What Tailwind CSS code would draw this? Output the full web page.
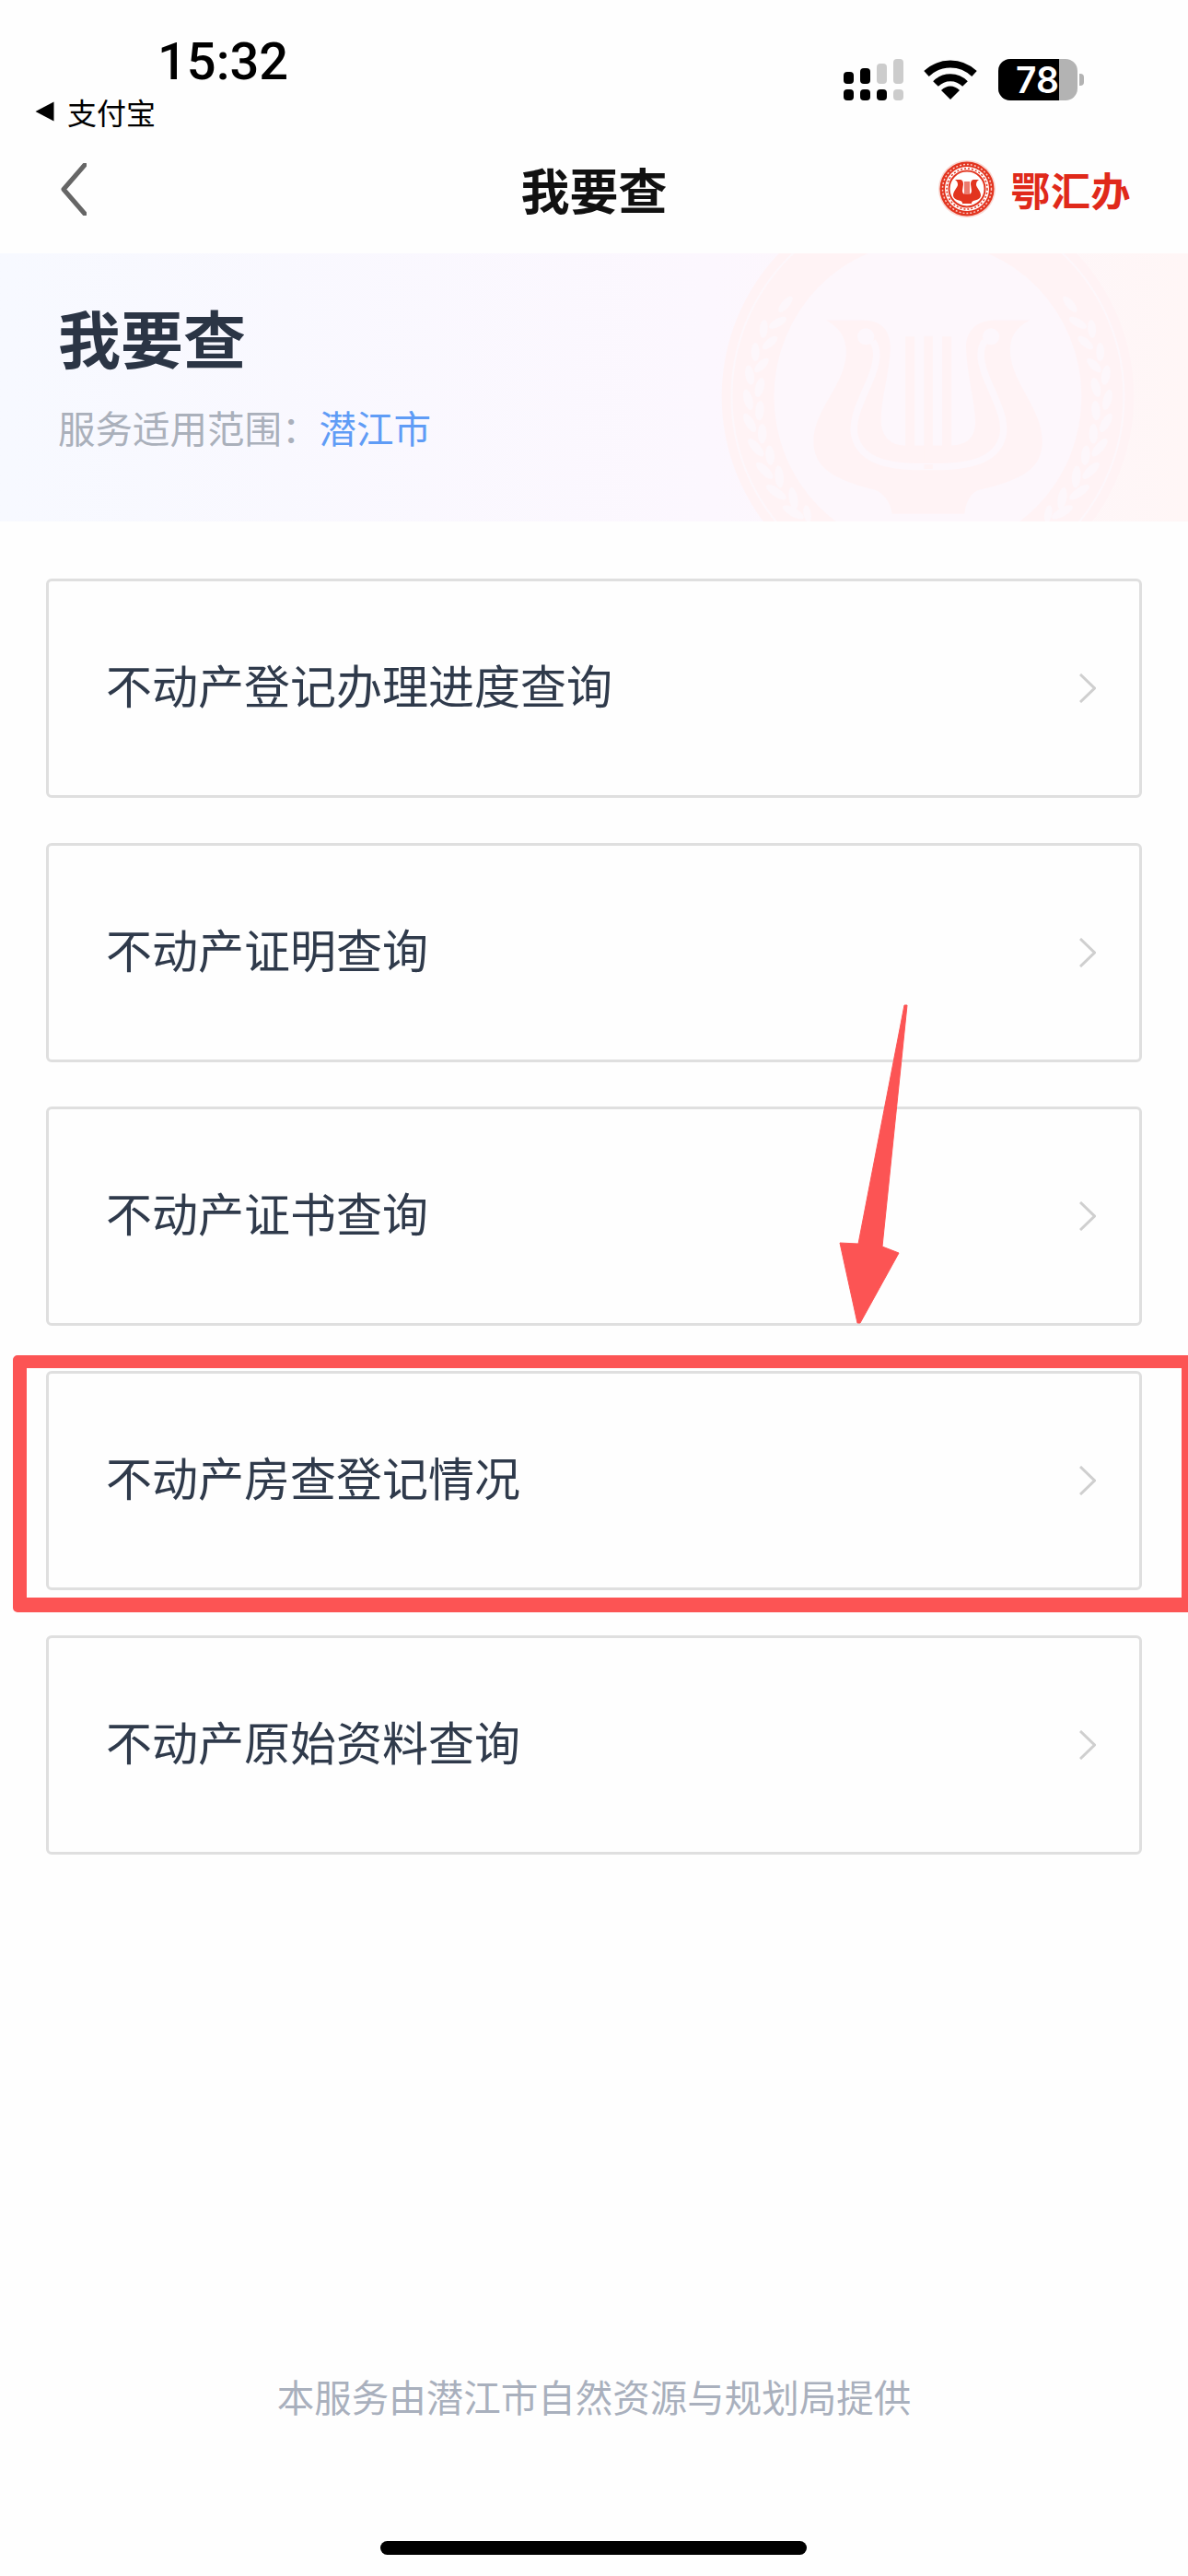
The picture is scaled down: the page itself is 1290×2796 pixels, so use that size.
<!DOCTYPE html>
<html lang="zh-CN">
  <head>
    <meta charset="UTF-8" />
    <meta name="viewport" content="width=device-width, initial-scale=1.0" />
    <title>我要查</title>
    <script src="https://cdn.jsdelivr.net/npm/@tailwindcss/browser@4"></script>
  </head>
  <body class="bg-[#fefefe] font-['Noto_Sans_CJK_SC',sans-serif]">
    <div class="relative flex h-[2796px] w-[1290px] flex-col overflow-hidden">
      <!-- status bar -->
      <div class="flex h-[135px] justify-between">
        <div class="pt-[34px] pl-[38px]">
          <div class="ml-[133px] font-['Roboto',sans-serif] text-[56px] leading-[66px] font-medium text-black">15:32</div>
          <div class="mt-[3px] flex items-center">
            <svg width="21" height="22" viewBox="0 0 21 22" class="mr-[14px]"><path d="M20.5 0.5V21.5L0.5 11Z" fill="#000" /></svg>
            <span class="text-[32px] leading-[36px] text-black">支付宝</span>
          </div>
        </div>
        <div class="flex items-start pt-[64px] pr-[113px]">
          <!-- signal -->
          <svg width="65" height="45" viewBox="0 0 65 45" class="mr-[22px]">
            <rect x="0" y="14" width="11" height="13" rx="4" fill="#000" />
            <rect x="18" y="10" width="11" height="17" rx="4" fill="#000" />
            <rect x="36" y="5" width="11" height="22" rx="4" fill="#ccc" />
            <rect x="54" y="0" width="11" height="27" rx="4" fill="#ccc" />
            <rect x="0" y="33" width="11" height="12" rx="4" fill="#000" />
            <rect x="18" y="33" width="11" height="12" rx="4" fill="#000" />
            <rect x="36" y="33" width="11" height="12" rx="4" fill="#000" />
            <rect x="54" y="33" width="11" height="12" rx="4" fill="#ccc" />
          </svg>
          <!-- wifi -->
          <svg width="58" height="43" viewBox="0 0 58 43" class="mt-[1px] mr-[23px]">
            <path d="M3 15C18 1 40 1 55 15" fill="none" stroke="#000" stroke-width="8" />
            <path d="M13 26C22 17 36 17 45 26" fill="none" stroke="#000" stroke-width="8" />
            <path d="M29 43L19 33C25 27 33 27 39 33Z" fill="#000" />
          </svg>
          <!-- battery -->
          <div class="flex h-[45px] w-[86px] rounded-[13px] bg-[#b3b3b3]">
            <div class="flex h-full w-[66px] items-center justify-end rounded-l-[13px] bg-black font-['Inter',sans-serif] text-[39px] leading-[45px] font-semibold text-white">78</div>
          </div>
          <div class="mt-[16px] ml-[2px] h-[13px] w-[5px] rounded-r-[4px] bg-[#b3b3b3]"></div>
        </div>
      </div>

      <!-- nav -->
      <div class="relative flex h-[140px] items-center justify-between pr-[62px] pl-[66px]">
        <svg width="28" height="57" viewBox="0 0 28 57"><path d="M26 2L3 28.5L26 55" fill="none" stroke="#666" stroke-width="5" stroke-linecap="round" stroke-linejoin="round" /></svg>
        <span class="absolute left-0 w-full text-center text-[53px] leading-[60px] font-bold text-[#111]">我要查</span>
        <div class="flex items-center gap-[17px]">
          <svg width="62" height="62" viewBox="0 0 62 62">
            <circle cx="31" cy="31" r="31" fill="#f9d6d1" />
            <circle cx="31" cy="31" r="29.5" fill="#e2341f" />
            <circle cx="31" cy="31" r="26.5" fill="none" stroke="#f9c9c2" stroke-width="1.5" stroke-dasharray="2 2" />
            <circle cx="31" cy="31" r="24" fill="#fff" />
            <circle cx="31" cy="31" r="22" fill="none" stroke="#e2341f" stroke-width="1.5" stroke-dasharray="2 2" />
            <circle cx="31" cy="31" r="19.5" fill="#fff" stroke="#e2341f" stroke-width="2" />
            <path d="M18 21H23C26 21 27 23 27 26L26 33C26 36 28 37 30 37H32C34 37 36 36 36 33L35 26C35 23 36 21 39 21H44C41 23 41 25 41 27C42 30 46 34 46 38C46 41 43 43 38 44C36 45 36 46 36 47H26C26 46 26 45 24 44C19 43 16 41 16 38C16 34 20 30 21 27C21 25 21 23 18 21Z" fill="#e2341f" />
            <path d="M29 23V38M31 23V38M33 23V38" stroke="#e2341f" stroke-width="1.3" />
          </svg>
          <span class="text-[43px] leading-[50px] font-bold tracking-[0.5px] text-[#e0291a]">鄂汇办</span>
        </div>
      </div>

      <!-- banner -->
      <div class="relative h-[291px] overflow-hidden bg-gradient-to-r from-[#f7f9ff] via-[#fcf7fe] via-60% to-[#fff6f6] pt-[57px] pl-[63px]">
        <svg class="absolute top-0 left-[760px]" width="530" height="291" viewBox="0 15 1568 870" preserveAspectRatio="none">
          <ellipse cx="732" cy="480" rx="662" ry="672" fill="#fff3f5" />
          <ellipse cx="732" cy="480" rx="630" ry="640" fill="none" stroke="#fdf7fb" stroke-width="6" />
          <ellipse cx="732" cy="480" rx="494" ry="505" fill="#fdf7fc" />
          <g fill="#fdf7fb">
            <ellipse cx="275" cy="180" rx="13" ry="32" transform="rotate(40 275 180)" />
            <ellipse cx="250" cy="240" rx="13" ry="32" transform="rotate(60 250 240)" />
            <ellipse cx="205" cy="260" rx="13" ry="30" transform="rotate(5 205 260)" />
            <ellipse cx="225" cy="305" rx="13" ry="30" transform="rotate(50 225 305)" />
            <ellipse cx="178" cy="335" rx="13" ry="30" transform="rotate(0 178 335)" />
            <ellipse cx="198" cy="378" rx="13" ry="30" transform="rotate(45 198 378)" />
            <ellipse cx="160" cy="410" rx="14" ry="32" transform="rotate(-10 160 410)" />
            <ellipse cx="192" cy="450" rx="14" ry="32" transform="rotate(15 192 450)" />
            <ellipse cx="155" cy="490" rx="14" ry="34" transform="rotate(-15 155 490)" />
            <ellipse cx="192" cy="525" rx="14" ry="32" transform="rotate(5 192 525)" />
            <ellipse cx="160" cy="565" rx="14" ry="34" transform="rotate(-30 160 565)" />
            <ellipse cx="200" cy="600" rx="14" ry="32" transform="rotate(0 200 600)" />
            <ellipse cx="180" cy="645" rx="14" ry="36" transform="rotate(-40 180 645)" />
            <ellipse cx="225" cy="670" rx="14" ry="32" transform="rotate(-5 225 670)" />
            <ellipse cx="208" cy="720" rx="14" ry="36" transform="rotate(-45 208 720)" />
            <ellipse cx="255" cy="740" rx="14" ry="36" transform="rotate(-5 255 740)" />
            <ellipse cx="245" cy="790" rx="14" ry="38" transform="rotate(-55 245 790)" />
            <ellipse cx="300" cy="810" rx="14" ry="36" transform="rotate(-10 300 810)" />
            <ellipse cx="300" cy="855" rx="14" ry="38" transform="rotate(-60 300 855)" />
            <ellipse cx="345" cy="860" rx="12" ry="28" transform="rotate(-10 345 860)" />
            <ellipse cx="1189" cy="180" rx="13" ry="32" transform="rotate(-40 1189 180)" />
            <ellipse cx="1214" cy="240" rx="13" ry="32" transform="rotate(-60 1214 240)" />
            <ellipse cx="1259" cy="260" rx="13" ry="30" transform="rotate(-5 1259 260)" />
            <ellipse cx="1239" cy="305" rx="13" ry="30" transform="rotate(-50 1239 305)" />
            <ellipse cx="1286" cy="335" rx="13" ry="30" transform="rotate(0 1286 335)" />
            <ellipse cx="1266" cy="378" rx="13" ry="30" transform="rotate(-45 1266 378)" />
            <ellipse cx="1304" cy="410" rx="14" ry="32" transform="rotate(10 1304 410)" />
            <ellipse cx="1272" cy="450" rx="14" ry="32" transform="rotate(-15 1272 450)" />
            <ellipse cx="1309" cy="490" rx="14" ry="34" transform="rotate(15 1309 490)" />
            <ellipse cx="1272" cy="525" rx="14" ry="32" transform="rotate(-5 1272 525)" />
            <ellipse cx="1304" cy="565" rx="14" ry="34" transform="rotate(30 1304 565)" />
            <ellipse cx="1264" cy="600" rx="14" ry="32" transform="rotate(0 1264 600)" />
            <ellipse cx="1284" cy="645" rx="14" ry="36" transform="rotate(40 1284 645)" />
            <ellipse cx="1239" cy="670" rx="14" ry="32" transform="rotate(5 1239 670)" />
            <ellipse cx="1256" cy="720" rx="14" ry="36" transform="rotate(45 1256 720)" />
            <ellipse cx="1209" cy="740" rx="14" ry="36" transform="rotate(5 1209 740)" />
            <ellipse cx="1219" cy="790" rx="14" ry="38" transform="rotate(55 1219 790)" />
            <ellipse cx="1164" cy="810" rx="14" ry="36" transform="rotate(10 1164 810)" />
            <ellipse cx="1164" cy="855" rx="14" ry="38" transform="rotate(60 1164 855)" />
            <ellipse cx="1119" cy="860" rx="12" ry="28" transform="rotate(10 1119 860)" />
          </g>
          <!-- lyre -->
          <path d="M405 232H520C590 232 612 270 612 325C606 420 580 490 582 565C586 615 620 640 660 638H808C860 638 885 610 885 560C882 490 858 410 855 320C855 265 890 232 950 232H1060C1010 260 995 290 997 340C1005 440 1100 520 1100 625C1100 710 1040 750 900 782C870 790 855 820 850 860H618C610 820 590 792 560 782C430 750 365 710 365 625C365 520 470 440 470 335C470 285 445 255 405 232Z" fill="#fff3f5" />
          <path d="M660 285H690V700H660ZM720 283H748V715H720ZM778 285H808V700H778Z" fill="#fff3f5" />
          <path d="M555 300C575 330 570 370 545 430C510 510 492 550 495 595C505 670 570 705 690 707H778C900 705 965 670 975 595C978 550 960 510 925 430C900 370 895 330 915 300" fill="none" stroke="#fdf7fc" stroke-width="22" />
          <circle cx="533" cy="285" r="27" fill="#fdf7fc" />
          <circle cx="935" cy="285" r="27" fill="#fdf7fc" />
          <path d="M720 700H748V715H720Z" fill="#fff3f5" />
        </svg>
        <div class="relative text-[68px] leading-[68px] font-bold text-[#2b3545]">我要查</div>
        <div class="relative mt-[44px] text-[40.5px] leading-[40px] text-[#aab0bb]">服务适用范围：<span class="text-[#5f9cf6]">潜江市</span></div>
      </div>

      <!-- list -->
      <div class="flex flex-col gap-[48.7px] px-[50px] pt-[62px]">
        <div class="flex h-[238px] items-center justify-between rounded-[6px] border-[3px] border-[#dfdfdf] pr-[47px] pl-[62px]">
          <span class="mb-[10px] text-[50px] leading-[60px] text-[#2f3a4b]">不动产登记办理进度查询</span>
          <svg width="18" height="32" viewBox="0 0 18 32"><path d="M1 1L16.5 16L1 31" fill="none" stroke="#cfcfcf" stroke-width="3" /></svg>
        </div>
        <div class="flex h-[238px] items-center justify-between rounded-[6px] border-[3px] border-[#dfdfdf] pr-[47px] pl-[62px]">
          <span class="mb-[10px] text-[50px] leading-[60px] text-[#2f3a4b]">不动产证明查询</span>
          <svg width="18" height="32" viewBox="0 0 18 32"><path d="M1 1L16.5 16L1 31" fill="none" stroke="#cfcfcf" stroke-width="3" /></svg>
        </div>
        <div class="flex h-[238px] items-center justify-between rounded-[6px] border-[3px] border-[#dfdfdf] pr-[47px] pl-[62px]">
          <span class="mb-[10px] text-[50px] leading-[60px] text-[#2f3a4b]">不动产证书查询</span>
          <svg width="18" height="32" viewBox="0 0 18 32"><path d="M1 1L16.5 16L1 31" fill="none" stroke="#cfcfcf" stroke-width="3" /></svg>
        </div>
        <div class="flex h-[238px] items-center justify-between rounded-[6px] border-[3px] border-[#dfdfdf] pr-[47px] pl-[62px]">
          <span class="mb-[10px] text-[50px] leading-[60px] text-[#2f3a4b]">不动产房查登记情况</span>
          <svg width="18" height="32" viewBox="0 0 18 32"><path d="M1 1L16.5 16L1 31" fill="none" stroke="#cfcfcf" stroke-width="3" /></svg>
        </div>
        <div class="flex h-[238px] items-center justify-between rounded-[6px] border-[3px] border-[#dfdfdf] pr-[47px] pl-[62px]">
          <span class="mb-[10px] text-[50px] leading-[60px] text-[#2f3a4b]">不动产原始资料查询</span>
          <svg width="18" height="32" viewBox="0 0 18 32"><path d="M1 1L16.5 16L1 31" fill="none" stroke="#cfcfcf" stroke-width="3" /></svg>
        </div>
      </div>

      <!-- footer -->
      <div class="mt-auto mb-[6px] text-center text-[40.5px] leading-[40px] text-[#a9b0bd]">本服务由潜江市自然资源与规划局提供</div>
      <div class="mt-[131px] mb-[23px] ml-[413px] h-[15px] w-[463px] rounded-full bg-black"></div>

      <!-- red annotation drawn over the screenshot -->
      <div class="absolute top-[1471px] left-[14px] h-[279px] w-[1276px] rounded-tl-[5px] rounded-bl-[5px] border-t-[14px] border-r-[7px] border-b-[16px] border-l-[15px] border-[#fc5454]"></div>
      <svg class="absolute top-0 left-0" width="1290" height="2796" viewBox="0 0 1290 2796">
        <path d="M982 1091H985L958 1353L976 1360L934 1436H931L912 1349L932 1350Z" fill="#fc5454" stroke="#fc5454" stroke-width="1" stroke-linejoin="round" />
      </svg>
    </div>
  </body>
</html>
